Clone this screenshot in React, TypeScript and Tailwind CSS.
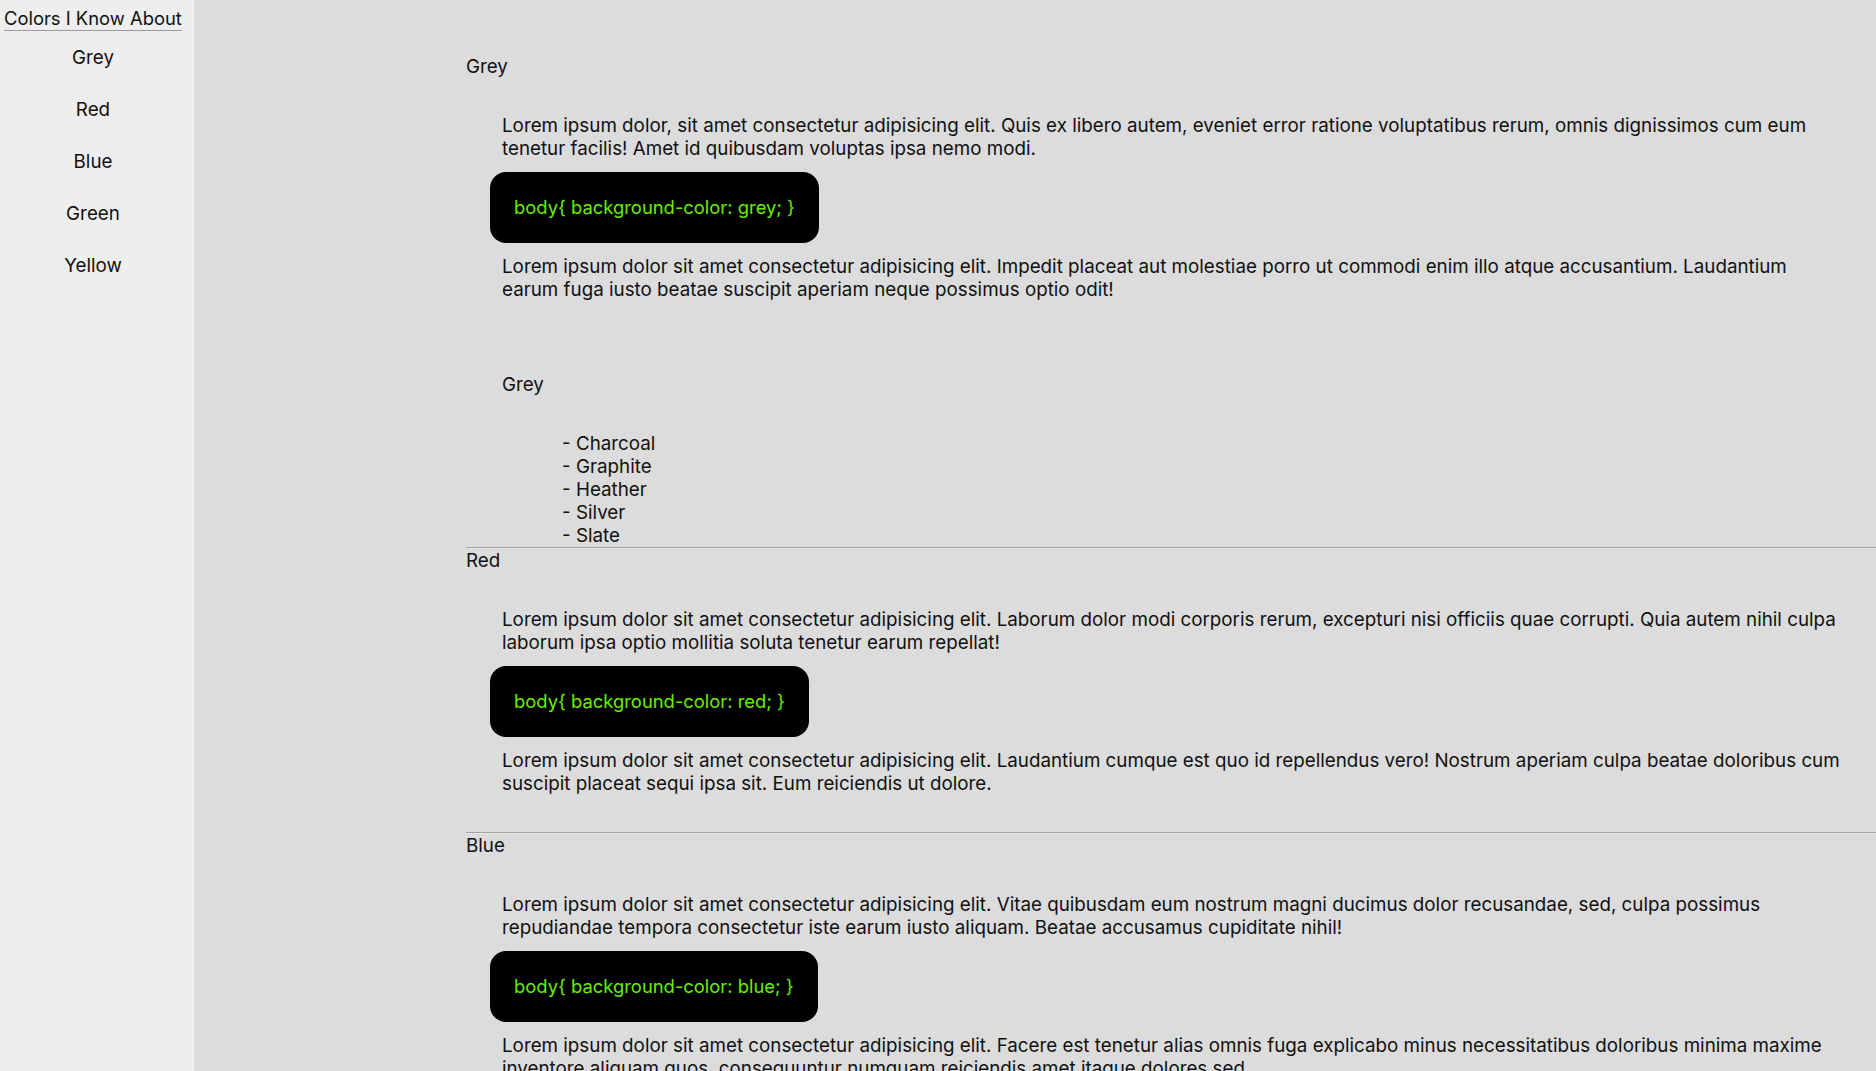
const navItems = ["Grey", "Red", "Blue", "Green", "Yellow"];

type Section = {
  name: string;
  intro: string[];
  after: string[];
  shades?: string[];
};

const sections: Section[] = [
  {
    name: "Grey",
    intro: [
      "Lorem ipsum dolor, sit amet consectetur adipisicing elit. Quis ex libero autem, eveniet error ratione voluptatibus rerum, omnis dignissimos cum eum",
      "tenetur facilis! Amet id quibusdam voluptas ipsa nemo modi.",
    ],
    after: [
      "Lorem ipsum dolor sit amet consectetur adipisicing elit. Impedit placeat aut molestiae porro ut commodi enim illo atque accusantium. Laudantium",
      "earum fuga iusto beatae suscipit aperiam neque possimus optio odit!",
    ],
    shades: ["Charcoal", "Graphite", "Heather", "Silver", "Slate"],
  },
  {
    name: "Red",
    intro: [
      "Lorem ipsum dolor sit amet consectetur adipisicing elit. Laborum dolor modi corporis rerum, excepturi nisi officiis quae corrupti. Quia autem nihil culpa",
      "laborum ipsa optio mollitia soluta tenetur earum repellat!",
    ],
    after: [
      "Lorem ipsum dolor sit amet consectetur adipisicing elit. Laudantium cumque est quo id repellendus vero! Nostrum aperiam culpa beatae doloribus cum",
      "suscipit placeat sequi ipsa sit. Eum reiciendis ut dolore.",
    ],
  },
  {
    name: "Blue",
    intro: [
      "Lorem ipsum dolor sit amet consectetur adipisicing elit. Vitae quibusdam eum nostrum magni ducimus dolor recusandae, sed, culpa possimus",
      "repudiandae tempora consectetur iste earum iusto aliquam. Beatae accusamus cupiditate nihil!",
    ],
    after: [
      "Lorem ipsum dolor sit amet consectetur adipisicing elit. Facere est tenetur alias omnis fuga explicabo minus necessitatibus doloribus minima maxime",
      "inventore aliquam quos, consequuntur numquam reiciendis amet itaque dolores sed.",
    ],
  },
  {
    name: "Green",
    intro: [
      "Lorem ipsum dolor sit amet consectetur adipisicing elit. Natus, quam. Eligendi, praesentium dolorum.",
    ],
    after: ["Lorem ipsum dolor sit amet consectetur adipisicing elit. Illum, odit."],
  },
  {
    name: "Yellow",
    intro: ["Lorem ipsum dolor sit amet consectetur adipisicing elit. Quas, explicabo."],
    after: ["Lorem ipsum dolor sit amet consectetur adipisicing elit. Veniam, nemo."],
  },
];

function Lines({ lines }: { lines: string[] }) {
  return (
    <p className="whitespace-nowrap">
      {lines.map((l, i) => (
        <span key={i}>
          {l}
          {i < lines.length - 1 && <br />}
        </span>
      ))}
    </p>
  );
}

function ColorSection({ s, first }: { s: Section; first: boolean }) {
  return (
    <section>
      {!first && <hr className="h-[2px] border-0 border-t border-t-[#a3a3a3] border-b border-b-[#e6e6e6]" />}
      <h2>{s.name}</h2>
      <div className={`ml-[36px] mt-[36px] ${s.shades ? "" : "mb-[37px]"}`}>
        <Lines lines={s.intro} />
        <div className="mt-[12px] -ml-[12px] w-fit rounded-[16px] bg-black px-[24px] py-[24px] text-[18.4px] text-[#66ee00]">
          body{"{"} background-color: {s.name.toLowerCase()}; {"}"}
        </div>
        <div className="mt-[12px]">
          <Lines lines={s.after} />
        </div>
        {s.shades && (
          <div className="mt-[72px]">
            <h3>{s.name}</h3>
            <ul className="mt-[36px] ml-[60px]">
              {s.shades.map((sh) => (
                <li key={sh}>- {sh}</li>
              ))}
            </ul>
          </div>
        )}
      </div>
    </section>
  );
}

export default function App() {
  return (
    <div
      className="flex h-screen overflow-hidden text-[18.8px] leading-[23px] text-[#111]"
      style={{ fontFamily: "Inter, 'Noto Sans', sans-serif" }}
    >
      <aside className="w-[194px] shrink-0 bg-[#eeeeee]">
        <nav className="w-[186px]">
          <div className="ml-[4px] w-fit pt-[7px] text-[18.4px] border-b border-[#9a9a9a] whitespace-nowrap">Colors I Know About</div>
          {navItems.map((n) => (
            <div key={n} className="flex h-[52px] items-center justify-center">
              {n}
            </div>
          ))}
        </nav>
      </aside>
      <main className="flex-1 bg-[#dcdcdc] pl-[272px] pt-[55px]">
        {sections.map((s, i) => (
          <ColorSection key={s.name} s={s} first={i === 0} />
        ))}
      </main>
    </div>
  );
}
